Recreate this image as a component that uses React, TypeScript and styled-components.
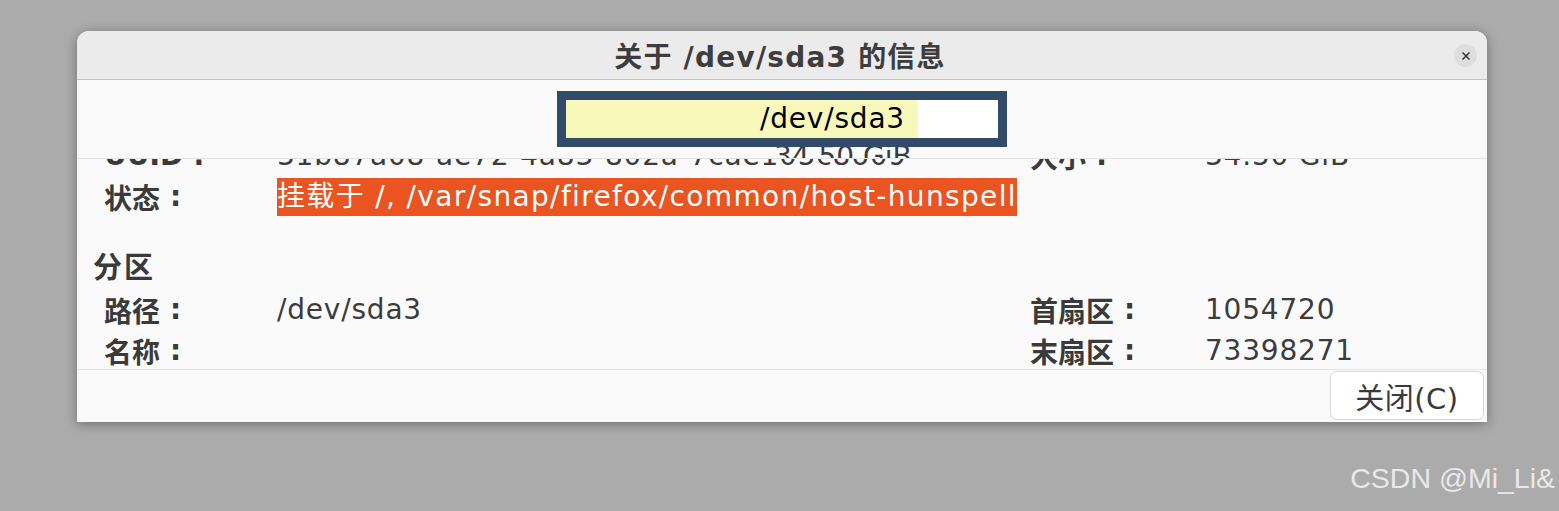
import { FC, ReactNode } from "react";
import styled, { createGlobalStyle } from "styled-components";

const GlobalStyle = createGlobalStyle`
  html, body {
    margin: 0;
    padding: 0;
    background: #ababab;
    width: 1559px;
    height: 511px;
    overflow: hidden;
  }
`;

const FONT = `"DejaVu Sans", "Noto Sans CJK SC", sans-serif`;

const Desktop = styled.div`
  position: relative;
  width: 1559px;
  height: 511px;
  padding: 31px 0 0 77px;
  box-sizing: border-box;
  font-family: ${FONT};
`;

const Window = styled.div`
  width: 1410px;
  height: 391px;
  display: flex;
  flex-direction: column;
  background: #fafafa;
  border-radius: 12px 12px 0 0;
  box-shadow: 0 2px 12px rgba(0, 0, 0, 0.35);
  overflow: hidden;
`;

const TitleBar = styled.div`
  height: 48px;
  flex: none;
  display: flex;
  align-items: center;
  justify-content: center;
  position: relative;
  background: #ebebeb;
  border-bottom: 1px solid #c4c4c4;
`;

const Title = styled.h1`
  margin: 0 0 0 -4px;
  font-size: 28px;
  font-weight: bold;
  letter-spacing: 1.2px;
  color: #3d3d3d;
`;

const CloseButton = styled.button`
  position: absolute;
  right: 10px;
  top: 13px;
  width: 23px;
  height: 23px;
  border: none;
  border-radius: 50%;
  background: #dedede;
  display: flex;
  align-items: center;
  justify-content: center;
  padding: 0;
`;

const TopPane = styled.div`
  height: 78px;
  flex: none;
  position: relative;
  overflow: hidden;
  border-bottom: 1px solid #e4e4e4;
`;

const GhostValue = styled.span`
  position: absolute;
  left: 697px;
  top: 56px;
  line-height: 41px;
  font-size: 28px;
  color: #3c3c3c;
`;

const OverlayBox = styled.div`
  position: relative;
  z-index: 1;
  margin: 11px 0 0 480px;
  width: 450px;
  height: 56px;
  box-sizing: border-box;
  border: 9px solid #324b69;
  display: flex;
  background: #ffffff;
`;

const Highlight = styled.span`
  width: 352px;
  height: 100%;
  box-sizing: border-box;
  background: #f8f8bb;
  padding-right: 13px;
  text-align: right;
  font-size: 28px;
  line-height: 38px;
  letter-spacing: 0.8px;
  color: #000;
`;

const ScrollArea = styled.div`
  height: 210px;
  flex: none;
  overflow: hidden;
  border-bottom: 1px solid #e4e4e4;
`;

const ScrollContent = styled.div`
  margin-top: -24px;
`;

const InfoGrid = styled.div`
  display: grid;
  grid-template-columns: 173px 753px 175px 1fr;
  grid-auto-rows: 41px;
  padding-left: 27px;
  align-items: center;
`;

const LabelText = styled.span`
  display: flex;
  align-items: center;
  font-size: 28px;
  font-weight: bold;
  color: #3a3a3a;
  white-space: nowrap;
`;

const Colon = styled.span`
  margin-left: 10px;
`;

const Label: FC<{ children: ReactNode }> = ({ children }) => (
  <LabelText>
    {children}
    <Colon>:</Colon>
  </LabelText>
);

const Value = styled.span`
  font-size: 28px;
  letter-spacing: 0.8px;
  color: #3c3c3c;
  white-space: nowrap;
`;

const Selected = styled.span`
  justify-self: start;
  background: #e95420;
  color: #ffffff;
  font-size: 28px;
  line-height: 38px;
  letter-spacing: 1.35px;
  white-space: nowrap;
`;

const SectionHeading = styled.h2`
  margin: 31px 0 0 16px;
  font-size: 29px;
  font-weight: bold;
  letter-spacing: 2px;
  line-height: 41px;
  color: #3a3a3a;
`;

const Footer = styled.div`
  flex: 1;
  display: flex;
  justify-content: flex-end;
  align-items: flex-start;
  padding: 1px 3px 0 0;
`;

const DialogButton = styled.button`
  width: 154px;
  height: 49px;
  border: 1px solid #d6d6d6;
  border-radius: 7px;
  background: #ffffff;
  font-family: ${FONT};
  font-size: 29px;
  letter-spacing: 0.5px;
  color: #3a3a3a;
  padding: 0;
`;

const Watermark = styled.span`
  position: absolute;
  right: 4px;
  top: 462px;
  font-family: "Liberation Sans", Arial, sans-serif;
  font-size: 28.5px;
  color: #f0f0f0;
  opacity: 0.9;
`;

const CloseIcon: FC = () => (
  <svg width="10" height="10" viewBox="0 0 10 10">
    <path d="M1.5 1.5 L8.5 8.5 M8.5 1.5 L1.5 8.5" stroke="#3a3a3a" strokeWidth="1.6" />
  </svg>
);

const App: FC = () => {
  return (
    <>
      <GlobalStyle />
      <Desktop>
        <Window>
          <TitleBar>
            <Title>关于 /dev/sda3 的信息</Title>
            <CloseButton>
              <CloseIcon />
            </CloseButton>
          </TitleBar>
          <TopPane>
            <GhostValue>34.50 GiB</GhostValue>
            <OverlayBox>
              <Highlight>/dev/sda3</Highlight>
            </OverlayBox>
          </TopPane>
          <ScrollArea>
            <ScrollContent>
              <InfoGrid>
                <Label>UUID</Label>
                <Value>31b87a08-ae72-4a83-802a-7cae105c8609</Value>
                <Label>大小</Label>
                <Value>34.50 GiB</Value>
                <Label>状态</Label>
                <Selected>挂载于 /, /var/snap/firefox/common/host-hunspell</Selected>
                <span />
                <span />
              </InfoGrid>
              <SectionHeading>分区</SectionHeading>
              <InfoGrid>
                <Label>路径</Label>
                <Value>/dev/sda3</Value>
                <Label>首扇区</Label>
                <Value>1054720</Value>
                <Label>名称</Label>
                <Value />
                <Label>末扇区</Label>
                <Value>73398271</Value>
              </InfoGrid>
            </ScrollContent>
          </ScrollArea>
          <Footer>
            <DialogButton>关闭(C)</DialogButton>
          </Footer>
        </Window>
        <Watermark>CSDN @Mi_Li&amp;</Watermark>
      </Desktop>
    </>
  );
};

export default App;
